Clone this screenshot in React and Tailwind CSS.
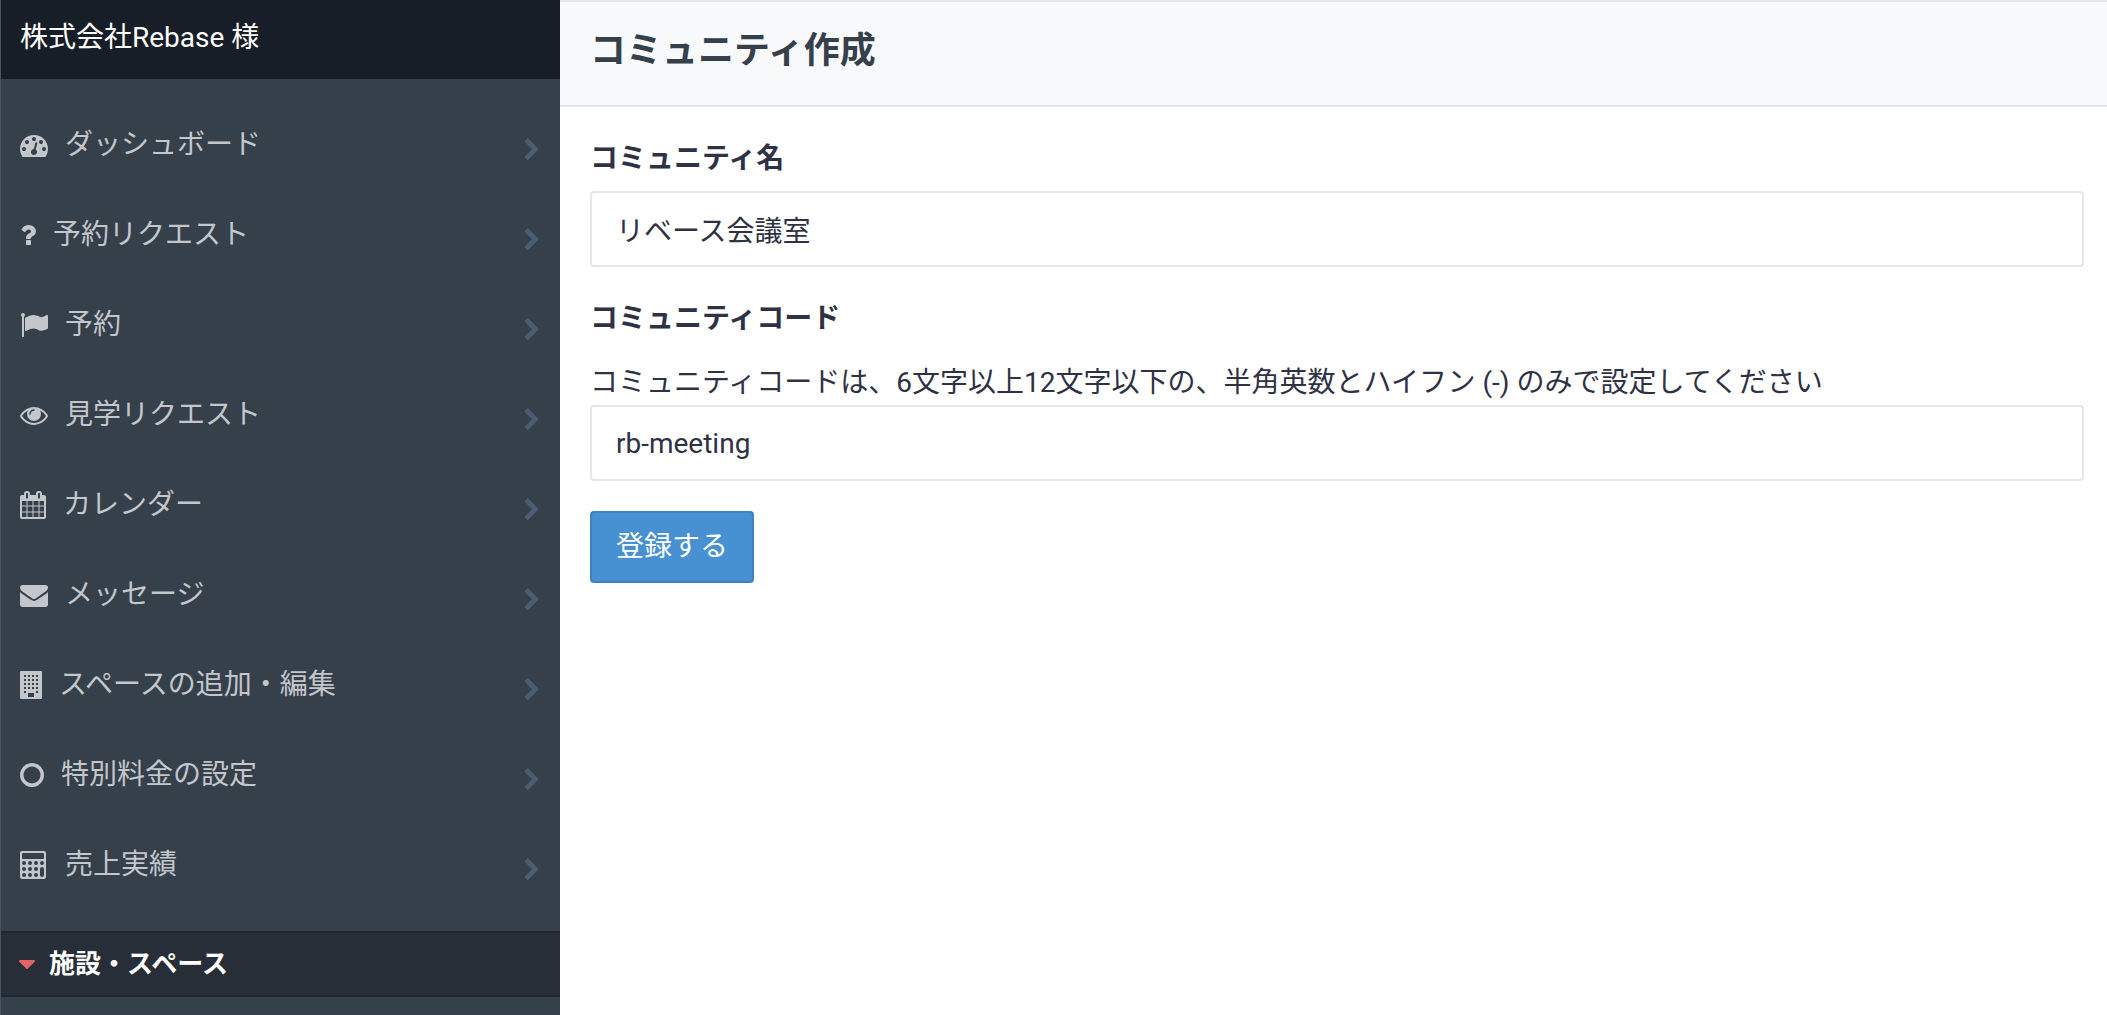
import { useState } from "react"

// Glyph outlines on a 1792 grid, each cropped to its own advance width
const ICONS = {
  dashboard: {
    box: "0 0 1792 1792",
    d: "M384 1152q0-53-37.5-90.5t-90.5-37.5-90.5 37.5-37.5 90.5 37.5 90.5 90.5 37.5 90.5-37.5 37.5-90.5zm192-448q0-53-37.5-90.5t-90.5-37.5-90.5 37.5-37.5 90.5 37.5 90.5 90.5 37.5 90.5-37.5 37.5-90.5zm428 481l101-382q6-26-7.5-48.5t-38.5-29.5-48 6.5-30 39.5l-101 382q-60 5-107 43.5t-63 98.5q-20 77 20 146t117 89 146-20 89-117q16-60-6-117t-72-91zm660-33q0-53-37.5-90.5t-90.5-37.5-90.5 37.5-37.5 90.5 37.5 90.5 90.5 37.5 90.5-37.5 37.5-90.5zm-640-640q0-53-37.5-90.5t-90.5-37.5-90.5 37.5-37.5 90.5 37.5 90.5 90.5 37.5 90.5-37.5 37.5-90.5zm448 192q0-53-37.5-90.5t-90.5-37.5-90.5 37.5-37.5 90.5 37.5 90.5 90.5 37.5 90.5-37.5 37.5-90.5zm320 448q0 261-141 483-19 29-54 29h-1402q-35 0-54-29-141-221-141-483 0-182 71-348t191-286 286-191 348-71 348 71 286 191 191 286 71 348z",
  },
  question: {
    box: "384 0 1024 1792",
    d: "M1088 1256v240q0 16-12 28t-28 12h-240q-16 0-28-12t-12-28v-240q0-16 12-28t28-12h240q16 0 28 12t12 28zm316-600q0 54-15.5 101t-35 76.5-55 59.5-57.5 43.5-61 35.5q-41 23-68.5 65t-27.5 67q0 17-12 32.5t-28 15.5h-240q-15 0-25.5-18.5t-10.5-37.5v-45q0-83 65-156.5t143-108.5q59-27 84-56t25-76q0-42-46.5-74t-107.5-32q-65 0-108 29-35 25-107 115-13 16-31 16-12 0-25-8l-164-125q-13-10-15.5-25t5.5-28q160-266 464-266 80 0 161 31t146 83 106 127.5 41 158.5z",
  },
  flag: {
    box: "0 0 1792 1792",
    d: "M320 256q0 72-64 110v1266q0 13-9.5 22.5t-22.5 9.5h-64q-13 0-22.5-9.5t-9.5-22.5v-1266q-64-38-64-110 0-53 37.5-90.5t90.5-37.5 90.5 37.5 37.5 90.5zm1472 64v763q0 25-12.5 38.5t-39.5 27.5q-215 116-369 116-61 0-123.5-22t-108.5-48-115.5-48-142.5-22q-192 0-464 146-17 9-33 9-26 0-45-19t-19-45v-742q0-32 31-55 21-14 79-43 236-120 421-120 107 0 200 29t219 88q38 19 88 19 54 0 117.5-21t110-47 88-47 54.5-21q26 0 45 19t19 45z",
  },
  eye: {
    box: "0 0 1792 1792",
    d: "M1664 960q-152-236-381-353 61 104 61 225 0 185-131.5 316.5t-316.5 131.5-316.5-131.5-131.5-316.5q0-121 61-225-229 117-381 353 133 205 333.5 326.5t434.5 121.5 434.5-121.5 333.5-326.5zm-720-384q0-20-14-34t-34-14q-125 0-214.5 89.5t-89.5 214.5q0 20 14 34t34 14 34-14 14-34q0-86 61-147t147-61q20 0 34-14t14-34zm848 384q0 34-20 69-140 230-376.5 368.5t-499.5 138.5-499.5-139-376.5-368q-20-35-20-69t20-69q140-229 376.5-368t499.5-139 499.5 139 376.5 368q20 35 20 69z",
  },
  calendar: {
    box: "64 0 1664 1792",
    d: "M192 1664h288v-288h-288v288zm352 0h320v-288h-320v288zm-352-352h288v-320h-288v320zm352 0h320v-320h-320v320zm-352-384h288v-288h-288v288zm736 736h320v-288h-320v288zm-384-736h320v-288h-320v288zm768 736h288v-288h-288v288zm-384-352h320v-320h-320v320zm-352-864v-288q0-13-9.5-22.5t-22.5-9.5h-64q-13 0-22.5 9.5t-9.5 22.5v288q0 13 9.5 22.5t22.5 9.5h64q13 0 22.5-9.5t9.5-22.5zm736 864h288v-320h-288v320zm-384-384h320v-288h-320v288zm384 0h288v-288h-288v288zm32-480v-288q0-13-9.5-22.5t-22.5-9.5h-64q-13 0-22.5 9.5t-9.5 22.5v288q0 13 9.5 22.5t22.5 9.5h64q13 0 22.5-9.5t9.5-22.5zm384-64v1280q0 52-38 90t-90 38h-1408q-52 0-90-38t-38-90v-1280q0-52 38-90t90-38h128v-96q0-66 47-113t113-47h64q66 0 113 47t47 113v96h384v-96q0-66 47-113t113-47h64q66 0 113 47t47 113v96h128q52 0 90 38t38 90z",
  },
  envelope: {
    box: "0 0 1792 1792",
    d: "M1792 710v794q0 66-47 113t-113 47h-1472q-66 0-113-47t-47-113v-794q44 49 101 87 362 246 497 345 57 42 92.5 65.5t94.5 48 110 24.5h2q51 0 110-24.5t94.5-48 92.5-65.5q170-123 498-345 57-39 100-87zm0-294q0 79-49 151t-122 123q-376 261-468 325-10 7-42.5 31t-54 38.5-52 32.5-57.5 27-50 9h-2q-23 0-50-9t-57.5-27-52-32.5-54-38.5-42.5-31q-91-64-262-182.5t-205-142.5q-62-42-117-115.5t-55-136.5q0-78 41.5-130t118.5-52h1472q65 0 112.5 47t47.5 113z",
  },
  building: {
    box: "0 0 22 28",
    d: "M1 0H21Q22 0 22 1V27Q22 28 21 28H1Q0 28 0 27V1Q0 0 1 0zM4 4v2h2V4zM8 4v2h2V4zM12 4v2h2V4zM16 4v2h2V4zM4 8v2h2V8zM8 8v2h2V8zM12 8v2h2V8zM16 8v2h2V8zM4 12v2h2V12zM8 12v2h2V12zM12 12v2h2V12zM16 12v2h2V12zM4 16v2h2V16zM8 16v2h2V16zM12 16v2h2V16zM16 16v2h2V16zM4 20v2h2V20zM16 20v2h2V20zM8 22v4h6V22z",
  },
  circle: {
    box: "128 0 1536 1792",
    d: "M896 352q-148 0-273 73t-198 198-73 273 73 273 198 198 273 73 273-73 198-198 73-273-73-273-198-198-273-73zm768 544q0 209-103 385.5t-279.5 279.5-385.5 103-385.5-103-279.5-279.5-103-385.5 103-385.5 279.5-279.5 385.5-103 385.5 103 279.5 279.5 103 385.5z",
  },
  calculator: {
    box: "0 0 28 28",
    d: "M2 0H24Q26 0 26 2V26Q26 28 24 28H2Q0 28 0 26V2Q0 0 2 0zM3 2Q2 2 2 3V7Q2 8 3 8H23Q24 8 24 7V3Q24 2 23 2zM2 12a2 2 0 1 0 4 0a2 2 0 1 0-4 0zM8 12a2 2 0 1 0 4 0a2 2 0 1 0-4 0zM14 12a2 2 0 1 0 4 0a2 2 0 1 0-4 0zM20 12a2 2 0 1 0 4 0a2 2 0 1 0-4 0zM2 18a2 2 0 1 0 4 0a2 2 0 1 0-4 0zM8 18a2 2 0 1 0 4 0a2 2 0 1 0-4 0zM14 18a2 2 0 1 0 4 0a2 2 0 1 0-4 0zM2 24a2 2 0 1 0 4 0a2 2 0 1 0-4 0zM8 24a2 2 0 1 0 4 0a2 2 0 1 0-4 0zM14 24a2 2 0 1 0 4 0a2 2 0 1 0-4 0zM20 18V24a2 2 0 0 0 4 0V18a2 2 0 0 0-4 0z",
  },
  chevron: {
    box: "0 0 1792 1792",
    d: "M1363 877l-742 742q-19 19-45 19t-45-19l-166-166q-19-19-19-45t19-45l531-531-531-531q-19-19-19-45t19-45l166-166q19-19 45-19t45 19l742 742q19 19 19 45t-19 45z",
  },
  caret: {
    box: "384 0 1024 1792",
    d: "M1408 704q0 26-19 45l-448 448q-19 19-45 19t-45-19l-448-448q-19-19-19-45t19-45 45-19h896q26 0 45 19t19 45z",
  },
}

const MENU = [
  { icon: "dashboard", label: "ダッシュボード" },
  { icon: "question", label: "予約リクエスト" },
  { icon: "flag", label: "予約" },
  { icon: "eye", label: "見学リクエスト" },
  { icon: "calendar", label: "カレンダー" },
  { icon: "envelope", label: "メッセージ" },
  { icon: "building", label: "スペースの追加・編集" },
  { icon: "circle", label: "特別料金の設定" },
  { icon: "calculator", label: "売上実績" },
]

function Icon({ name, className }) {
  return (
    <svg viewBox={ICONS[name].box} className={className} fill="currentColor" fillRule="evenodd" aria-hidden="true">
      <path d={ICONS[name].d} />
    </svg>
  )
}

function Sidebar() {
  return (
    <aside className="w-[560px] shrink-0 border-l border-[#48535f] bg-[#35404b]">
      <div className="h-[79px] bg-[#181e27] px-[19px] pt-[18px] text-[28px] leading-10 text-white">
        株式会社Rebase 様
      </div>
      <nav className="py-[21px]">
        {MENU.map(item => (
          <a key={item.label} href="#" className="flex h-[90px] items-center pr-4 pl-[19px] text-[28px] leading-10 text-[#c3c6cb]">
            <Icon name={item.icon} className="h-7 w-auto shrink-0" />
            <span className="ml-[17px] flex-1">{item.label}</span>
            <Icon name="chevron" className="mt-[10px] size-6 shrink-0 text-[#4b5d73]" />
          </a>
        ))}
      </nav>
      <button type="button" className="flex h-[66px] w-full items-center border-y-2 border-[#20262e] bg-[#282e37] pl-[18px] text-[26px] leading-10 font-bold text-white">
        <Icon name="caret" className="h-7 w-auto shrink-0 text-[#e2636b]" />
        <span className="ml-[14px]">施設・スペース</span>
      </button>
    </aside>
  )
}

export default function App() {
  const [name, setName] = useState("リベース会議室")
  const [code, setCode] = useState("rb-meeting")

  const inputClass = "block h-[76px] w-full rounded border-2 border-[#e5e6e7] bg-white px-6 text-[28px] leading-10 outline-none"

  return (
    <div className="flex min-h-screen bg-white font-['Roboto','Noto_Sans_CJK_JP',sans-serif] text-[#2f3144]">
      <Sidebar />
      <main className="min-w-0 flex-1">
        <header className="h-[107px] border-y-2 border-t-[#e7e8eb] border-b-[#e3e5e7] bg-[#f8f9fb] px-[30px] pt-[25px]">
          <h1 className="text-[36px] leading-[48px] font-bold text-[#35404b]">コミュニティ作成</h1>
        </header>
        <form className="pt-8 pr-[23px] pl-[30px]" onSubmit={e => e.preventDefault()}>
          <label htmlFor="name" className="mb-3 block text-[28px] leading-10 font-bold">コミュニティ名</label>
          <input id="name" type="text" value={name} onChange={e => setName(e.target.value)} className={inputClass} />

          <label htmlFor="code" className="mt-8 block text-[28px] leading-10 font-bold">コミュニティコード</label>
          <p id="code-help" className="mt-6 mb-[2px] text-[28px] leading-10">
            コミュニティコードは、6文字以上12文字以下の、半角英数とハイフン (-) のみで設定してください
          </p>
          <input id="code" type="text" aria-describedby="code-help" value={code} onChange={e => setCode(e.target.value)} className={inputClass} />

          <button type="submit" className="mt-[30px] h-[72px] rounded border-2 border-[#3f82c0] bg-[#4790d2] px-6 text-[28px] leading-10 text-white">
            登録する
          </button>
        </form>
      </main>
    </div>
  )
}
